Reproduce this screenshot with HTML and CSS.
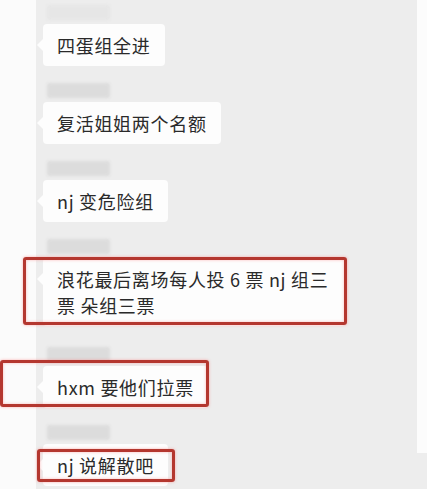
FILE: index.html
```html
<!DOCTYPE html>
<html lang="zh-CN">
  <head>
    <meta charset="UTF-8" />
    <meta name="viewport" content="width=device-width, initial-scale=1.0" />
    <title>聊天记录</title>
    <link rel="stylesheet" href="styles.css">
  </head>
  <body>
    <div class="screen">
      <div class="side-left"></div>

      <div class="chat">
        <div class="msg msg-first">
          <div class="name name-faint"></div>
          <div class="bubble">四蛋组全进</div>
        </div>

        <div class="msg">
          <div class="name"></div>
          <div class="bubble">复活姐姐两个名额</div>
        </div>

        <div class="msg">
          <div class="name"></div>
          <div class="bubble">nj 变危险组</div>
        </div>

        <div class="msg">
          <div class="name"></div>
          <div class="bubble">
            浪花最后离场每人投 6 票 nj 组三票 朵组三票
            <span class="mark mark-long"></span>
          </div>
        </div>

        <div class="msg msg-loose">
          <div class="name"></div>
          <div class="bubble">
            hxm 要他们拉票
            <span class="mark mark-wide"></span>
          </div>
        </div>

        <div class="msg">
          <div class="name"></div>
          <div class="bubble">
            nj 说解散吧
            <span class="mark mark-short"></span>
          </div>
        </div>
      </div>

      <div class="side-right"></div>
    </div>
  </body>
</html>
```

FILE: styles.css
```css
:root {
  --chat-bg: #ededed;
  --bubble: #fdfdfd;
  --text: #2a2a2a;
  --mark: #b4372f;
}

body {
  margin: 0;
  background: var(--chat-bg);
  font-family: "Noto Sans CJK SC", "Noto Sans", sans-serif;
  color: var(--text);
}

.screen {
  display: flex;
  height: 489px;
  overflow: hidden;
}

.side-left {
  width: 36px;
  flex-shrink: 0;
  background: #fbfbfb;
}

.side-right {
  width: 10px;
  height: 453px;
  flex-shrink: 0;
  background: #fcfcfc;
}

.chat {
  flex: 1;
  padding-left: 7px;
  display: flex;
  flex-direction: column;
  align-items: flex-start;
}

.msg {
  margin-top: 17px;
  display: flex;
  flex-direction: column;
  align-items: flex-start;
}

.msg-first {
  margin-top: 5px;
}

.msg-loose {
  margin-top: 21px;
}

/* blurred sender names */
.name {
  width: 63px;
  height: 15px;
  margin: 0 0 4px 4px;
  background: #dcdcdc;
  border-radius: 2px;
  filter: blur(1.5px);
}

.name-faint {
  background: #e6e6e6;
}

.bubble {
  position: relative;
  max-width: 274px;
  padding: 8px 14px;
  background: var(--bubble);
  border-radius: 4px;
  font-size: 18px;
  line-height: 26px;
  letter-spacing: 0.7px;
}

.bubble::before {
  content: "";
  position: absolute;
  top: 15px;
  left: -6px;
  border-top: 6px solid transparent;
  border-bottom: 6px solid transparent;
  border-right: 6px solid var(--bubble);
}

/* red annotation boxes */
.mark {
  position: absolute;
  border: 3px solid var(--mark);
  border-radius: 3px;
  box-shadow: 0 0 3px rgba(255, 120, 120, 0.6), inset 0 0 3px rgba(255, 120, 120, 0.5);
}

.mark-long {
  top: -1px;
  bottom: 1px;
  left: -20px;
  right: -2px;
}

.mark-wide {
  top: -6px;
  bottom: 1px;
  left: -43px;
  right: -1px;
}

.mark-short {
  top: 5px;
  bottom: 4px;
  left: -6px;
  right: -7px;
}
```
